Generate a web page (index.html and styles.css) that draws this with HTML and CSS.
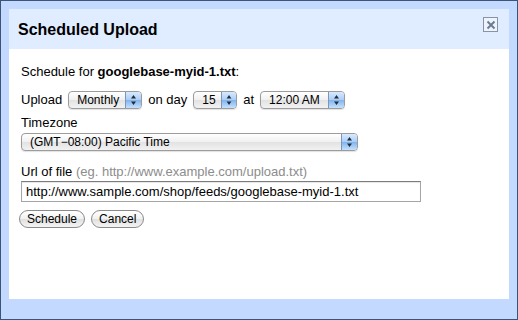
FILE: index.html
```html
<!DOCTYPE html>
<html lang="en">
<head>
    <meta charset="UTF-8">
    <meta name="viewport" content="width=device-width, initial-scale=1.0">
    <title>Scheduled Upload</title>
    <link rel="stylesheet" href="styles.css">
</head>
<body>
    <div class="dialog">
        <div class="dialog-inner">
            <div class="dialog-header">
                <h1>Scheduled Upload</h1>
                <span class="close-btn">
                    <svg width="12" height="12" viewBox="0 0 12 12">
                        <path d="M2.5 2.5 L9.5 9.5 M9.5 2.5 L2.5 9.5" stroke="#6b7c93" stroke-width="2" fill="none"/>
                    </svg>
                </span>
            </div>

            <div class="dialog-body">
                <p class="line">Schedule for <b>googlebase-myid-1.txt</b>:</p>

                <div class="row">
                    <span>Upload</span>
                    <span class="select sel-freq"><span class="select-text">Monthly</span><span class="select-arrow"></span></span>
                    <span>on day</span>
                    <span class="select sel-day"><span class="select-text">15</span><span class="select-arrow"></span></span>
                    <span>at</span>
                    <span class="select sel-time"><span class="select-text">12:00 AM</span><span class="select-arrow"></span></span>
                </div>

                <p class="label">Timezone</p>
                <span class="select sel-zone"><span class="select-text">(GMT&minus;08:00) Pacific Time</span><span class="select-arrow"></span></span>

                <p class="label url-label">Url of file <span class="hint">(eg. http://www.example.com/upload.txt)</span></p>
                <input class="url-input" type="text" value="http://www.sample.com/shop/feeds/googlebase-myid-1.txt">

                <div class="buttons">
                    <button class="btn">Schedule</button>
                    <button class="btn">Cancel</button>
                </div>
            </div>
        </div>
    </div>
</body>
</html>
```

FILE: styles.css
```css
body {
    margin: 0;
    padding: 0;
    font-family: "Liberation Sans", Arial, sans-serif;
    color: #000;
}

.dialog {
    width: 518px;
    height: 320px;
    box-sizing: border-box;
    border: 1px solid #3b5578;
    background-color: #c3d9ff;
    padding: 8px 8px 20px 8px;
}

.dialog-inner {
    height: 100%;
    display: flex;
    flex-direction: column;
    background-color: #fff;
}

/* Header */
.dialog-header {
    height: 40px;
    background-color: #e0ecff;
    display: flex;
    align-items: center;
    justify-content: space-between;
    padding: 0 11px 0 9px;
}

.dialog-header h1 {
    margin: 0;
    font-size: 16px;
    font-weight: bold;
    padding-top: 2px;
}

.close-btn {
    width: 13px;
    height: 13px;
    border: 1px solid #8793a6;
    background-color: #eef4fd;
    display: flex;
    align-items: center;
    justify-content: center;
    align-self: flex-start;
    margin-top: 8px;
}

/* Body */
.dialog-body {
    flex: 1;
    padding: 15px 12px 0 12px;
    font-size: 13px;
}

.line {
    margin: 0 0 10px 0;
    line-height: 16px;
}

.row {
    display: flex;
    align-items: center;
    gap: 6px;
    height: 19px;
    margin-bottom: 6px;
}

.label {
    margin: 0 0 3px 0;
    line-height: 15px;
}

.url-label {
    margin-top: 13px;
    margin-bottom: 2px;
}

.hint {
    color: #8c8c8c;
}

/* Fake aqua selects */
.select {
    display: inline-flex;
    height: 16px;
    border: 1px solid #9c9c9c;
    border-radius: 4px;
    background: linear-gradient(#ffffff, #f0f0f0 50%, #e2e2e2 51%, #f2f2f2);
    font-size: 12px;
    line-height: 16px;
    overflow: hidden;
    box-shadow: 0 1px 1px rgba(0, 0, 0, 0.12);
}

.select-text {
    flex: 1;
    padding: 0 5px 0 8px;
    white-space: nowrap;
}

.select-arrow {
    width: 15px;
    border-left: 1px solid #7f95b5;
    background:
        url("data:image/svg+xml;utf8,<svg xmlns='http://www.w3.org/2000/svg' width='15' height='16'><path d='M7.5 3 L10 6.5 L5 6.5 Z M7.5 13 L10 9.5 L5 9.5 Z' fill='%23232c38'/></svg>") center no-repeat,
        linear-gradient(#d9e9fd, #a9cdf6 50%, #7fb3ee 51%, #c6e1fd);
}

.sel-freq { width: 72px; }
.sel-day { width: 42px; }
.sel-time { width: 83px; }
.sel-zone { width: 335px; }

/* Url input */
.url-input {
    display: block;
    width: 400px;
    height: 21px;
    box-sizing: border-box;
    margin: 0;
    padding: 0 4px;
    border: 1px solid #a5a5a5;
    border-top-color: #7c7c7c;
    box-shadow: inset 0 1px 1px rgba(0, 0, 0, 0.1);
    font-family: "Liberation Sans", Arial, sans-serif;
    font-size: 13px;
    color: #000;
}

/* Buttons */
.buttons {
    display: flex;
    gap: 6px;
    margin-top: 8px;
    margin-left: -2px;
}

.btn {
    height: 18px;
    padding: 0 7px;
    border: 1px solid #8a8a8a;
    border-radius: 9px;
    background: linear-gradient(#ffffff, #f1f1f1 50%, #e0e0e0 51%, #f4f4f4);
    font-family: "Liberation Sans", Arial, sans-serif;
    font-size: 12px;
    line-height: 16px;
    color: #000;
}
```
